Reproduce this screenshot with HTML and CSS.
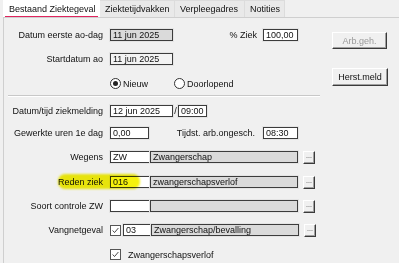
FILE: index.html
```html
<!DOCTYPE html>
<html lang="nl">
<head>
    <meta charset="UTF-8">
    <meta name="viewport" content="width=device-width, initial-scale=1.0">
    <title>Bestaand Ziektegeval</title>
    <link rel="stylesheet" href="styles.css">
</head>
<body>
    <div class="tabs">
        <div class="tab active">Bestaand Ziektegeval</div>
        <div class="tab">Ziektetijdvakken</div>
        <div class="tab">Verpleegadres</div>
        <div class="tab">Notities</div>
    </div>

    <div class="panel">
        <div class="top">
            <div class="top-fields">
                <div class="row r1">
                    <span class="lbl">Datum eerste ao-dag</span>
                    <div class="field ro w-date">11 jun 2025</div>
                    <span class="lbl-mid">% Ziek</span>
                    <div class="field w-short">100,00</div>
                </div>
                <div class="row r2">
                    <span class="lbl">Startdatum ao</span>
                    <div class="field plain w-date">11 jun 2025</div>
                </div>
                <div class="row r3">
                    <span class="lbl"></span>
                    <span class="radio checked"></span><span class="opt">Nieuw</span>
                    <span class="radio second"></span><span class="opt">Doorlopend</span>
                </div>
            </div>
            <div class="side">
                <button class="btn disabled">Arb.geh.</button>
                <button class="btn btn-2">Herst.meld</button>
            </div>
        </div>

        <div class="sep"></div>

        <div class="row r4">
            <span class="lbl">Datum/tijd ziekmelding</span>
            <div class="field w-date">12 jun 2025</div>
            <span class="slash">/</span>
            <div class="field w-time">09:00</div>
        </div>
        <div class="row r5">
            <span class="lbl">Gewerkte uren 1e dag</span>
            <div class="field w-hours">0,00</div>
            <span class="lbl-mid lbl-tijd">Tijdst. arb.ongesch.</span>
            <div class="field w-short">08:30</div>
        </div>
        <div class="row r6">
            <span class="lbl">Wegens</span>
            <div class="field w-code">ZW</div>
            <div class="field ro w-desc">Zwangerschap</div>
            <button class="dots">...</button>
        </div>
        <div class="row r7">
            <div class="marker"></div>
            <span class="lbl">Reden ziek</span>
            <div class="field w-code">016</div>
            <div class="field ro w-desc">zwangerschapsverlof</div>
            <button class="dots">...</button>
        </div>
        <div class="row r8">
            <span class="lbl">Soort controle ZW</span>
            <div class="field w-code"></div>
            <div class="field ro w-desc"></div>
            <button class="dots">...</button>
        </div>
        <div class="row r9">
            <span class="lbl">Vangnetgeval</span>
            <span class="check"><svg viewBox="0 0 11 11"><path d="M2 5.5 L4.3 8 L9 2.5" fill="none" stroke="#333" stroke-width="1.1"/></svg></span>
            <div class="field w-code-sm">03</div>
            <div class="field ro w-desc">Zwangerschap/bevalling</div>
            <button class="dots">...</button>
        </div>
        <div class="row r10">
            <span class="lbl"></span>
            <span class="check"><svg viewBox="0 0 11 11"><path d="M2 5.5 L4.3 8 L9 2.5" fill="none" stroke="#333" stroke-width="1.1"/></svg></span>
            <span class="opt opt-check">Zwangerschapsverlof</span>
        </div>
    </div>
</body>
</html>
```

FILE: styles.css
```css
/* Algemeen */
body {
    margin: 0;
    width: 399px;
    height: 263px;
    overflow: hidden;
    background: #f0f0f0;
    font-family: 'Liberation Sans', Arial, sans-serif;
    font-size: 9px;
    color: #111;
}

/* Tabbladen */
.tabs {
    display: flex;
    height: 17px;
    padding-left: 3px;
    background: #f0f0f0;
}

.tab {
    box-sizing: border-box;
    display: flex;
    align-items: center;
    padding: 0 0 0 5px;
    white-space: nowrap;
    background: #e9e9e9;
    border-right: 1px solid #dcdcdc;
    border-top: 1px solid #dcdcdc;
}

.tab.active {
    width: 97px;
    padding-left: 6px;
    background: #fff;
    border: none;
    position: relative;
}

.tab.active::after {
    content: '';
    position: absolute;
    left: 2px;
    right: 2px;
    bottom: 0;
    height: 1px;
    background: #e0245e;
}

.tab:nth-child(2) { width: 75px; }
.tab:nth-child(3) { width: 70px; }
.tab:nth-child(4) { width: 40px; }

/* Paneel */
.panel {
    margin-left: 3px;
    height: 245px;
    border-left: 1px solid #cfcfcf;
    border-top: 1px solid #cfcfcf;
}

.top {
    display: grid;
    grid-template-columns: 328px 56px;
}

.side {
    display: flex;
    flex-direction: column;
    padding-top: 14px;
}

.row {
    display: flex;
    align-items: center;
    height: 12px;
    margin-top: 12px;
    position: relative;
}

.r1 { margin-top: 11px; }
.r3 { margin-top: 13px; height: 11px; }
.r4 { margin-top: 8px; }
.r5 { margin-top: 10px; }
.r7, .r10 { margin-top: 13px; }
.r10 { height: 11px; }

.lbl {
    width: 99px;
    margin-right: 7px;
    text-align: right;
    white-space: nowrap;
}

.lbl-mid {
    width: 84px;
    margin-right: 6px;
    text-align: right;
}

.lbl-tijd {
    width: 106px;
    margin-right: 8px;
}

/* Velden */
.field {
    box-sizing: border-box;
    height: 12px;
    line-height: 10px;
    padding-left: 2px;
    background: #fff;
    border: 1px solid #3c3c3c;
    box-shadow: 0 0 0 1px #e4e4e4;
    white-space: nowrap;
    overflow: hidden;
}

.field.ro {
    background: #dadada;
}

.field.plain {
    background: #f3f3f3;
}

.w-date { width: 63px; }
.w-short { width: 35px; }
.w-time { width: 29px; }
.w-hours { width: 39px; }
.w-code { width: 40px; }
.w-code-sm { width: 28px; margin-left: 2px; }
.w-desc { width: 148px; }

.slash {
    width: 5px;
    text-align: center;
}

/* Knoppen */
.btn {
    box-sizing: border-box;
    width: 55px;
    height: 17px;
    padding: 0;
    font: inherit;
    color: #111;
    background: #f0f0f0;
    border: 1px solid;
    border-color: #fff #3a3a3a #3a3a3a #fff;
    box-shadow: inset -1px -1px 0 #a0a0a0;
}

.btn.disabled {
    color: #9a9a9a;
}

.btn-2 {
    margin-top: 19px;
    height: 18px;
    width: 56px;
}

.dots {
    box-sizing: border-box;
    width: 12px;
    height: 13px;
    margin-left: 5px;
    padding: 0 0 3px;
    font: inherit;
    font-size: 7px;
    line-height: 6px;
    color: #333;
    background: #f0f0f0;
    border: 1px solid;
    border-color: #fff #3a3a3a #3a3a3a #fff;
    box-shadow: inset -1px -1px 0 #a0a0a0;
}

.sep {
    width: 312px;
    height: 1px;
    margin: 6px 0 0 4px;
    background: #c8c8c8;
    border-bottom: 1px solid #fff;
}

/* Keuzerondjes en vinkjes */
.radio {
    box-sizing: border-box;
    width: 11px;
    height: 11px;
    border: 1px solid #333;
    border-radius: 50%;
    background: #fff;
    position: relative;
}

.radio.checked::after {
    content: '';
    position: absolute;
    left: 2px;
    top: 2px;
    width: 5px;
    height: 5px;
    border-radius: 50%;
    background: #222;
}

.radio.second {
    margin-left: 26px;
}

.opt {
    margin-left: 2px;
}

.check {
    box-sizing: border-box;
    width: 11px;
    height: 11px;
    border: 1px solid #555;
    background: #fff;
    display: flex;
}

.check svg {
    width: 100%;
    height: 100%;
}

.opt-check {
    margin-left: 7px;
}

/* Markeerstift */
.marker {
    position: absolute;
    left: 54px;
    top: -2px;
    width: 82px;
    height: 15px;
    border-radius: 7px;
    background: #f6f20c;
    filter: blur(1.2px);
    mix-blend-mode: multiply;
    z-index: 1;
}
```
